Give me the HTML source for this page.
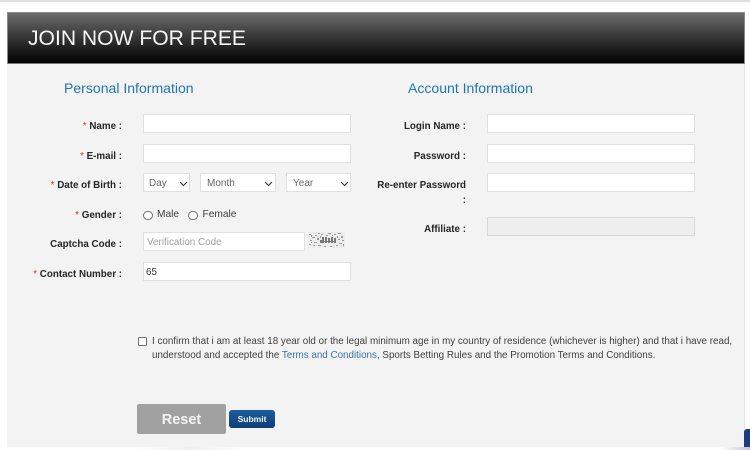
<!DOCTYPE html>
<html>
<head>
<meta charset="utf-8">
<style>
html,body{margin:0;padding:0;width:750px;height:450px;overflow:hidden;background:#fff}
body{font-family:"Liberation Sans",sans-serif;position:relative}
#w{position:absolute;left:0;top:0;width:750px;height:450px;filter:blur(.35px)}
.a{position:absolute}
.panel{left:7px;top:13px;width:738px;height:434px;background:#f3f3f3;border-right:1px solid #e4e4e4;box-sizing:border-box}
.head{left:7px;top:12px;width:738px;height:52px;box-sizing:border-box;border:1px solid #8a8a8a;border-bottom:1px solid #777;background:linear-gradient(#6c6c6c 0%,#3a3a3a 45%,#000 100%)}
.title{left:28px;top:25.5px;font-size:21.1px;line-height:26px;color:#f6f6f6;white-space:nowrap}
.h2{top:79px;font-size:14.05px;line-height:18px;color:#1f76ad;white-space:nowrap}
.lb{font-size:9.8px;line-height:14px;font-weight:bold;color:#262626;text-align:right;white-space:nowrap}
.lb i{font-style:normal;color:#d9302c;font-weight:normal}
.in{box-sizing:border-box;background:#fff;border:1px solid #e0e0e0;height:19px;font-size:9.9px;line-height:19px;color:#555;padding-left:2px;white-space:nowrap}
.sel{box-sizing:border-box;background:#fff;border:1px solid #e0e0e0;height:19px;font-size:10px;line-height:19px;color:#666;padding-left:6px}
.sel svg{position:absolute;top:7px}
.t{font-size:9.83px;line-height:14px;color:#3f3f3f;white-space:nowrap}
.radio{box-sizing:border-box;width:9.5px;height:9.5px;border:1px solid #707070;border-radius:50%;background:#fff}
</style>
</head>
<body>
<div id="w">
<div class="a" style="left:0;top:0;width:750px;height:2px;background:#dedede"></div>
<div class="a panel"></div>
<div class="a head"></div>
<div class="a title">JOIN NOW FOR FREE</div>
<div class="a h2" style="left:64px">Personal Information</div>
<div class="a h2" style="left:408px">Account Information</div>

<div class="a lb" style="right:628px;top:120px"><i>*</i> Name :</div>
<div class="a lb" style="right:628px;top:150px"><i>*</i> E-mail :</div>
<div class="a lb" style="right:628px;top:179px"><i>*</i> Date of Birth :</div>
<div class="a lb" style="right:628px;top:208.5px"><i>*</i> Gender :</div>
<div class="a lb" style="right:628px;top:238px">Captcha Code :</div>
<div class="a lb" style="right:628px;top:267.5px"><i>*</i> Contact Number :</div>

<div class="a in" style="left:143px;top:114px;width:208px"></div>
<div class="a in" style="left:143px;top:144px;width:208px"></div>

<div class="a sel" style="left:143px;top:173px;width:47px;padding-left:5px">Day<svg style="left:35px" width="9" height="6" viewBox="0 0 9 6"><path d="M1 1l3.5 3.5L8 1" fill="none" stroke="#444" stroke-width="1.2"/></svg></div>
<div class="a sel" style="left:200px;top:173px;width:76px">Month<svg style="left:63px" width="9" height="6" viewBox="0 0 9 6"><path d="M1 1l3.5 3.5L8 1" fill="none" stroke="#444" stroke-width="1.2"/></svg></div>
<div class="a sel" style="left:286px;top:173px;width:65px">Year<svg style="left:53px" width="9" height="6" viewBox="0 0 9 6"><path d="M1 1l3.5 3.5L8 1" fill="none" stroke="#444" stroke-width="1.2"/></svg></div>

<div class="a radio" style="left:143px;top:210.5px"></div>
<div class="a t" style="left:157px;top:208px;font-size:10.2px">Male</div>
<div class="a radio" style="left:188px;top:210.5px"></div>
<div class="a t" style="left:202.5px;top:208px;font-size:10.2px">Female</div>

<div class="a in" style="left:143px;top:232px;width:162px;color:#a0a0a0;padding-left:3px">Verification Code</div>
<svg class="a" style="left:308px;top:232px" width="37" height="16" viewBox="0 0 37 16">
<rect width="37" height="16" fill="#ececec"/>
<g fill="#9a9a9a">
<rect x="1" y="2" width="2" height="1"/><rect x="4" y="5" width="3" height="1"/><rect x="2" y="8" width="2" height="1"/><rect x="6" y="10" width="3" height="1"/><rect x="1" y="12" width="2" height="1"/><rect x="7" y="3" width="2" height="1"/><rect x="10" y="1" width="2" height="1"/><rect x="9" y="6" width="2" height="2"/><rect x="5" y="13" width="2" height="1"/><rect x="10" y="13" width="3" height="1"/><rect x="13" y="2" width="2" height="1"/><rect x="20" y="1" width="3" height="1"/><rect x="26" y="2" width="2" height="1"/><rect x="30" y="1" width="3" height="1"/><rect x="33" y="4" width="2" height="2"/><rect x="30" y="7" width="2" height="1"/><rect x="34" y="8" width="2" height="1"/><rect x="31" y="11" width="3" height="1"/><rect x="28" y="13" width="2" height="1"/><rect x="35" y="12" width="1" height="2"/><rect x="22" y="14" width="2" height="1"/><rect x="16" y="14" width="2" height="1"/><rect x="3" y="3" width="1" height="2"/><rect x="12" y="4" width="1" height="2"/><rect x="29" y="4" width="1" height="2"/><rect x="18" y="3" width="2" height="1"/><rect x="24" y="3" width="1" height="1"/><rect x="3" y="10" width="1" height="1"/>
</g>
<g fill="#777">
<rect x="12" y="8" width="2" height="3"/><rect x="14" y="5" width="2" height="6"/><rect x="17" y="5" width="2" height="6"/><rect x="20" y="6" width="2" height="5"/><rect x="23" y="5" width="2" height="6"/><rect x="26" y="6" width="2" height="5"/><rect x="12" y="9" width="16" height="1"/>
</g>
</svg>

<div class="a in" style="left:143px;top:262px;width:208px;color:#333">65</div>

<div class="a lb" style="right:284px;top:120px">Login Name :</div>
<div class="a lb" style="right:284px;top:150px">Password :</div>
<div class="a lb" style="right:284px;top:179px">Re-enter Password</div>
<div class="a lb" style="right:284px;top:194px">:</div>
<div class="a lb" style="right:284px;top:223px">Affiliate :</div>

<div class="a in" style="left:487px;top:114px;width:208px"></div>
<div class="a in" style="left:487px;top:144px;width:208px"></div>
<div class="a in" style="left:487px;top:173px;width:208px"></div>
<div class="a in" style="left:487px;top:217px;width:208px;background:#eeeeee;border-color:#d8d8d8"></div>

<div class="a" style="left:137.5px;top:337px;width:9px;height:9px;box-sizing:border-box;border:1px solid #707070;border-radius:1.5px;background:#fff"></div>
<div class="a t" style="left:152px;top:335px">I confirm that i am at least 18 year old or the legal minimum age in my country of residence (whichever is higher) and that i have read,</div>
<div class="a t" style="left:152px;top:349px">understood and accepted the <span style="color:#3a74a8">Terms and Conditions</span>, Sports Betting Rules and the Promotion Terms and Conditions.</div>

<div class="a" style="left:137px;top:404px;width:89px;height:30px;background:#a1a1a1;border-radius:2px;color:#f4f4f4;font-size:14.5px;line-height:32px;font-weight:bold;text-align:center">Reset</div>
<div class="a" style="left:229px;top:410px;width:46px;height:18px;background:linear-gradient(#1d5c9c,#0e3f78);border-radius:3px;color:#f2f4f8;font-size:8.5px;line-height:18px;font-weight:bold;text-align:center">Submit</div>

<div class="a" style="left:744px;top:429px;width:6px;height:18px;background:#1c3f78;border-radius:3px 0 0 0"></div>
<div class="a" style="left:130px;top:447px;width:120px;height:3px;background:linear-gradient(90deg,#fff,#efefef,#fff)"></div>
<div class="a" style="left:720px;top:447px;width:30px;height:3px;background:linear-gradient(90deg,#fff,#c4c9d2)"></div>
</div>
</body>
</html>
